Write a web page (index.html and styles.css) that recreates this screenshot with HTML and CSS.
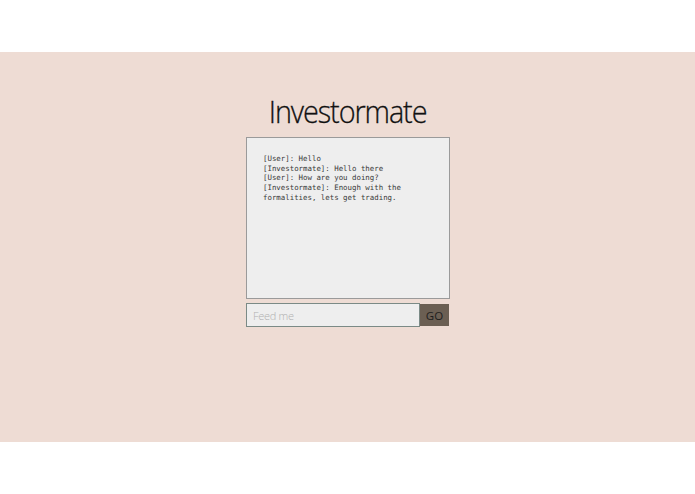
FILE: index.html
```html
<!DOCTYPE html>
<html>
<head>
<meta charset="utf-8">
<link rel="stylesheet" href="styles.css">
</head>
<body>
<div class="band">
  <h1 class="title">Investormate</h1>
  <div class="chat">
    <div class="line">[User]: Hello</div>
    <div class="line">[Investormate]: Hello there</div>
    <div class="line">[User]: How are you doing?</div>
    <div class="line">[Investormate]: Enough with the formalities, lets get trading.</div>
  </div>
  <form class="form">
    <input class="input" type="text" placeholder="Feed me" autofocus>
    <button class="go" type="button">GO</button>
  </form>
</div>
</body>
</html>
```
FILE: styles.css
```css
html, body { margin: 0; padding: 0; background: #ffffff; }
body { padding-top: 52px; height: 494px; box-sizing: border-box; }
.band {
  background: #eedcd4;
  height: 390px;
  display: flex;
  flex-direction: column;
  align-items: center;
  box-sizing: border-box;
  padding-top: 39px;
}
.title {
  margin: 0;
  font-family: "Open Sans", sans-serif;
  font-weight: 300;
  font-size: 32px;
  line-height: 40px;
  color: #111111;
  letter-spacing: -1.2px;
  transform: scaleX(0.9);
  height: 46px;
  -webkit-text-stroke: 0.3px #111111;
}
.chat {
  width: 204px;
  height: 162px;
  box-sizing: border-box;
  background: #eeeeee;
  border: 1px solid #9a9a9a;
  padding: 16px 16px 0 16px;
  font-family: "DejaVu Sans Mono", monospace;
  font-size: 7.4px;
  line-height: 9.7px;
  color: #3a3a3a;
  margin-left: 1px;
}
.form {
  display: flex;
  margin: 4px 0 0 1px;
  width: 204px;
}
.input {
  width: 174px;
  height: 24px;
  box-sizing: border-box;
  border: 1px solid #7b8a86;
  background: #eeeeee;
  padding: 0 6px;
  margin: 0;
  font-family: "Open Sans", sans-serif;
  font-weight: 300;
  font-size: 11px;
  letter-spacing: -0.3px;
  color: #333;
  outline: none;
}
.input::placeholder { color: #b0b0b0; }
.go {
  width: 29px;
  height: 22px;
  margin: 1px 0 0 0;
  border: none;
  background: #6b5f53;
  color: #1e1e1e;
  font-family: "Open Sans", sans-serif;
  font-size: 11.5px;
  padding: 0;
}
```
